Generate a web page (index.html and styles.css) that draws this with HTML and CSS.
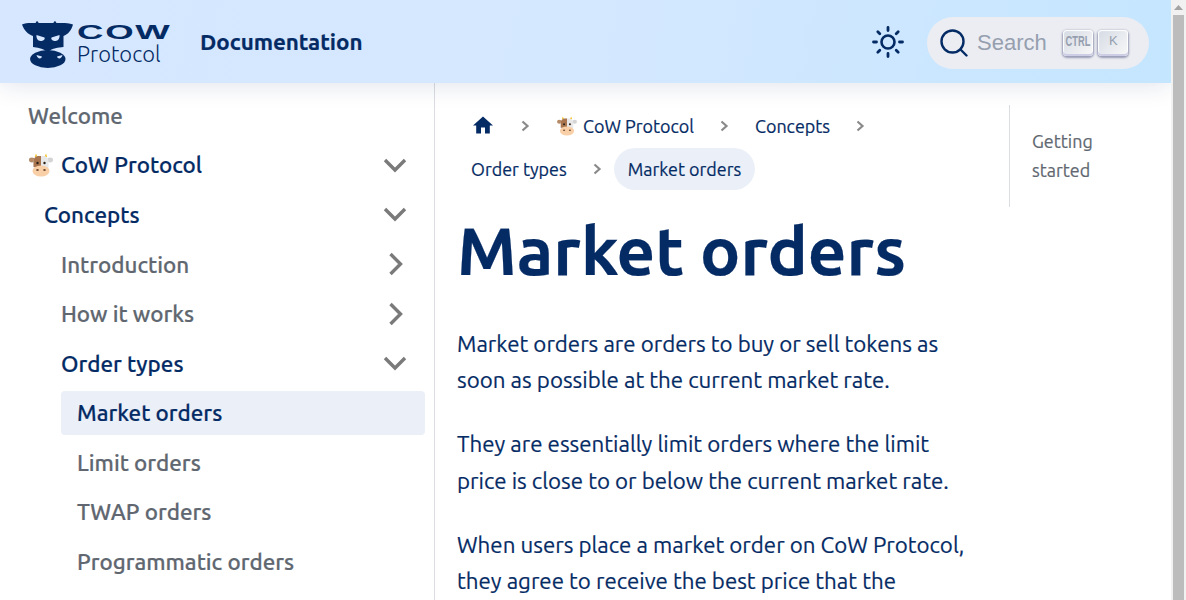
FILE: index.html
```html
<!DOCTYPE html>
<html lang="en">
<head>
<meta charset="utf-8">
<title>Market orders | CoW Protocol Documentation</title>
<link rel="stylesheet" href="styles.css">
</head>
<body>
<div class="page">
<nav class="navbar">
  <a class="brand" href="#">
    <svg class="brand-cow" viewBox="22 21 51 47" width="51" height="47">
      <path fill="#052b65" d="M22 24.500C26 22.500 31 23 35.500 23L37 20.800L38.800 23H53.200L55 20.800L56.500 23C61 23 68 22.500 73 24.500C71.500 30 68 34.500 63.500 36V47C58 47.500 53 48 47.500 52C42 48 37 47.500 33 47V36C28 34.500 24 30 22 24.500Z"/>
      <ellipse fill="#052b65" cx="47.800" cy="59" rx="17.700" ry="9"/>
      <path fill="#d6e7ff" d="M36.500 35L44.500 37.500C45.500 39.500 43 41 40.500 41C38 41 36 38 36.500 35ZM59.500 35L51.500 37.500C50.500 39.500 53 41 55.500 41C58 41 60 38 59.500 35Z"/>
      <path fill="#d6e7ff" d="M36.500 55L42 56.500C41.500 59 37.500 59.500 36.500 55ZM62.500 55L57 56.500C57.500 59 61.500 59.500 62.500 55Z"/>
    </svg>
    <span class="brand-words">
      <span class="brand-cowtext">COW</span>
      <span class="brand-protocol">Protocol</span>
    </span>
  </a>
  <a class="nav-title" href="#">Documentation</a>
  <span class="nav-spacer"></span>
  <svg class="sun" viewBox="0 0 32 32" width="32" height="32">
    <circle cx="16" cy="16" r="6.500" fill="none" stroke="#052b65" stroke-width="2.600"/>
    <path stroke="#052b65" stroke-width="2.800" stroke-linecap="round" d="M16 1.500V4.500M16 27.500V30.500M1.500 16H4.500M27.500 16H30.500M5.800 5.800L7.800 7.800M24.200 24.200L26.200 26.200M5.800 26.200L7.800 24.200M24.200 7.800L26.200 5.800"/>
  </svg>
  <button class="search" type="button">
    <svg viewBox="0 0 28 28" width="28" height="28">
      <circle cx="12.500" cy="12.500" r="11" fill="none" stroke="#052b65" stroke-width="2.400"/>
      <path stroke="#052b65" stroke-width="2.400" stroke-linecap="round" d="M20.500 20.500L26.500 26.500"/>
    </svg>
    <span class="search-text">Search</span>
    <span class="keys">
      <kbd class="key"><span class="key-ctrl">CTRL</span></kbd>
      <kbd class="key">K</kbd>
    </span>
  </button>
</nav>

<div class="layout">
  <aside class="sidebar">
    <ul class="menu">
      <li class="menu-row plain">Welcome</li>
      <li class="menu-row open"><span class="menu-label">
        <svg class="cow-emoji" viewBox="0 0 24 24" width="24" height="24"><use href="#cowface"/></svg>CoW Protocol</span>
        <svg class="caret" viewBox="0 0 24 24" width="24" height="24"><path d="M2 7L12 17L22 7"/></svg></li>
      <li class="menu-row open lvl1"><span class="menu-label">Concepts</span>
        <svg class="caret" viewBox="0 0 24 24" width="24" height="24"><path d="M2 7L12 17L22 7"/></svg></li>
      <li class="menu-row lvl2"><span class="menu-label">Introduction</span>
        <svg class="caret" viewBox="0 0 24 24" width="24" height="24"><path d="M7.500 2L17.500 12L7.500 22"/></svg></li>
      <li class="menu-row lvl2"><span class="menu-label">How it works</span>
        <svg class="caret" viewBox="0 0 24 24" width="24" height="24"><path d="M7.500 2L17.500 12L7.500 22"/></svg></li>
      <li class="menu-row open lvl2"><span class="menu-label">Order types</span>
        <svg class="caret" viewBox="0 0 24 24" width="24" height="24"><path d="M2 7L12 17L22 7"/></svg></li>
      <li class="menu-row lvl3 active">Market orders</li>
      <li class="menu-row lvl3">Limit orders</li>
      <li class="menu-row lvl3">TWAP orders</li>
      <li class="menu-row lvl3">Programmatic orders</li>
    </ul>
  </aside>

  <main class="main">
    <article class="doc">
      <nav class="crumbs">
        <a class="crumb" href="#"><svg viewBox="0 0 24 24" width="24" height="24"><path fill="#052b65" d="M10 19.500v-6h4v6h4.800v-8H22L12 2.500 2 11.500h3.200v8z"/></svg></a>
        <svg class="sep" viewBox="0 0 33 12" width="33" height="12"><path d="M13.500 1.500L18.500 6L13.500 10.500"/></svg>
        <a class="crumb" href="#"><svg class="cow-small" viewBox="0 0 24 24" width="20" height="20"><use href="#cowface"/></svg>CoW Protocol</a>
        <svg class="sep" viewBox="0 0 33 12" width="33" height="12"><path d="M13.500 1.500L18.500 6L13.500 10.500"/></svg>
        <a class="crumb" href="#">Concepts</a>
        <svg class="sep" viewBox="0 0 33 12" width="33" height="12"><path d="M13.500 1.500L18.500 6L13.500 10.500"/></svg>
        <a class="crumb" href="#">Order types</a>
        <svg class="sep" viewBox="0 0 33 12" width="33" height="12"><path d="M13.500 1.500L18.500 6L13.500 10.500"/></svg>
        <span class="crumb current">Market orders</span>
      </nav>
      <h1>Market orders</h1>
      <p>Market orders are orders to buy or sell tokens as soon as possible at the current market rate.</p>
      <p>They are essentially limit orders where the limit price is close to or below the current market rate.</p>
      <p>When users place a market order on CoW Protocol, they agree to receive the best price that the</p>
    </article>
    <div class="toc"><a href="#">Getting started</a></div>
  </main>
</div>
</div>

<div class="scrollbar">
  <svg class="scroll-up" viewBox="0 0 9 5" width="9" height="5"><path fill="#a3a3a3" d="M4.500 0L9 5H0Z"/></svg>
  <div class="scroll-thumb"></div>
</div>

<svg class="defs" width="0" height="0">
  <symbol id="cowface" viewBox="0 0 24 24">
    <path fill="#f5c32c" d="M7 .500l1.500 3.500-2.800 0zM17 .500l1.200 3.500-2.800 0z"/>
    <ellipse cx="2.800" cy="7" rx="2.800" ry="2.400" fill="#b58a66"/>
    <ellipse cx="21.200" cy="7" rx="2.800" ry="2.400" fill="#d4d4d4"/>
    <rect x="4.500" y="3" width="15" height="16" rx="5" fill="#e8e8e8"/>
    <path fill="#a8754f" d="M12 3H9.500A5 5 0 0 0 4.500 8v6H12z"/>
    <circle cx="8.500" cy="10" r="1.200" fill="#2b2018"/>
    <circle cx="15.500" cy="10" r="1.200" fill="#2b2018"/>
    <ellipse cx="12" cy="18" rx="8.500" ry="5.500" fill="#f8cfa6"/>
    <ellipse cx="8.500" cy="17" rx="1.300" ry=".9" fill="#6d4a33"/>
    <ellipse cx="15.500" cy="17" rx="1.300" ry=".9" fill="#6d4a33"/>
  </symbol>
</svg>
</body>
</html>
```
FILE: styles.css
```css
html { overflow: hidden; }
body { margin: 0; height: 600px; display: flex; overflow: hidden; background: #fff; color: #052b65; font-family: "Ubuntu", "Noto Sans", "Open Sans", sans-serif; font-size: 22.4px; }
a { color: inherit; text-decoration: none; }
ul { list-style: none; margin: 0; padding: 0; }
.defs { position: absolute; }

.page { width: 1171px; height: 600px; overflow: hidden; flex: none; }
.scrollbar { flex: none; display: flex; flex-direction: column; align-items: center; width: 15px; height: 600px; box-sizing: border-box; padding: 5px 2px 0; background: #f1f1f1; }
.scroll-up { flex: none; margin-bottom: 5px; }
.scroll-thumb { flex: 1; width: 11px; background: #bcbcbc; }

.navbar { display: flex; align-items: center; height: 83px; padding: 0 22px; box-sizing: border-box; background: linear-gradient(100deg, #d6e7ff 0%, #d4e8ff 50%, #c5e6ff 100%); box-shadow: 0 1px 24px rgba(5,43,101,.14); position: relative; z-index: 2; }
.brand { display: flex; align-items: center; gap: 4px; margin-top: 5px; }
.brand-words { display: flex; flex-direction: column; width: 95px; }
.brand-cowtext { font-family: "Liberation Sans", sans-serif; font-weight: 700; font-size: 21px; line-height: 19px; letter-spacing: 1px; transform: scaleX(1.74); transform-origin: left; }
.brand-protocol { font-size: 22px; line-height: 25px; font-weight: 300; }
.nav-title { margin-left: 28px; font-weight: 700; font-size: 22.400px; letter-spacing: -.05px; -webkit-text-stroke: .2px currentColor; }
.nav-spacer { flex: 1; }
.sun { margin-right: 23px; }
.search { display: flex; align-items: center; width: 222px; height: 52px; margin-top: 2px; padding: 0 0 0 13px; border: 0; border-radius: 26px; background: #ebedf2; }
.search-text { margin-left: 9px; font-family: "Liberation Sans", sans-serif; font-size: 22px; color: #969faf; }
.keys { display: flex; gap: 5px; margin-left: 16.500px; }
.key { display: flex; justify-content: center; width: 30px; height: 26px; border-radius: 4px; font-family: "Liberation Sans", sans-serif; font-size: 13px; line-height: 22px; color: #969faf; background: linear-gradient(-225deg, #d5dbe4, #f8f8f8); box-shadow: inset 0 -2px 0 0 #cdcde6, inset 0 0 1px 1px #fff, 0 1px 2px 1px rgba(30,35,90,.4); }
.key-ctrl { display: inline-block; font-size: 15px; font-weight: 700; transform: scaleX(.62); }

.layout { display: flex; -webkit-text-stroke: .2px currentColor; }
.sidebar { width: 435px; box-sizing: border-box; flex: none; height: 517px; padding: 10.400px 9px 0 11px; border-right: 1px solid #dadde1; }
.menu { display: flex; flex-direction: column; gap: 5.550px; }
.menu-row { display: flex; align-items: center; justify-content: space-between; height: 44px; padding: 0 0 0 17px; border-radius: 4px; font-weight: 500; color: #606770; }
.menu-row.open { color: #052b65; }
.menu-label { display: flex; align-items: center; gap: 8px; }
.cow-emoji { flex: none; margin-left: 1px; }
.caret { flex: none; margin-right: 18px; fill: none; stroke: #7a7a7a; stroke-width: 3.400; }
.lvl1 { margin-left: 16px; }
.lvl2 { margin-left: 33px; }
.lvl3 { margin-left: 50px; padding-left: 16px; }
.menu-row.active { background: #ebf0f8; color: #052b65; }

.main { flex: 1; display: flex; min-width: 0; }
.doc { width: 545px; box-sizing: border-box; padding: 22px 0 0 22px; flex: none; }
.crumbs { display: flex; flex-wrap: wrap; align-items: center; font-size: 17.920px; row-gap: 1px; }
.crumb { display: flex; align-items: center; height: 42px; padding: 0 14px; gap: 6px; border-radius: 21px; }
.cow-small { margin-left: 1px; }
.sep { flex: none; fill: none; stroke: #8a8a8a; stroke-width: 2.200; }
.crumb.current { background: #ebf0f8; }
h1 { margin: 18px 0 33.500px; font-size: 67.200px; line-height: 84px; font-weight: 700; }
p { margin: 0 0 27.500px; font-size: 22.300px; line-height: 36.500px; }
.toc { flex: 1; margin: 22px 8px 0 29px; align-self: flex-start; padding: 22px; border-left: 1px solid #dadde1; font-size: 17.920px; line-height: 29px; color: #606770; }
```
